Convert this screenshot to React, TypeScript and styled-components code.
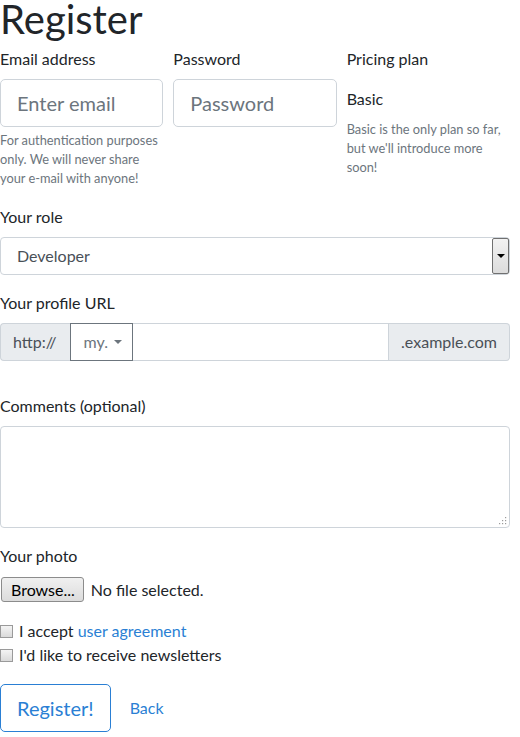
import React from "react";
import styled, { createGlobalStyle } from "styled-components";

const Global = createGlobalStyle`
  html, body { margin: 0; padding: 0; background: #fff; }
  body {
    font-family: "Lato", "Noto Sans", "Liberation Sans", sans-serif;
    font-size: 16px;
    line-height: 24px;
    color: #212529;
  }
  * { box-sizing: border-box; }
`;

const Page = styled.form`
  width: 510px;
  display: flex;
  flex-direction: column;
`;

const Title = styled.h1`
  margin: 0 0 8px;
  font-size: 40px;
  line-height: 39px;
  font-weight: 400;
`;

const Row = styled.div`
  display: grid;
  grid-template-columns: repeat(3, 1fr);
  column-gap: 10px;
  margin-bottom: 16px;
`;

const Group = styled.div<{ $mb?: number }>`
  display: flex;
  flex-direction: column;
  margin-bottom: ${(p) => (p.$mb ?? 16)}px;
`;

const Label = styled.label`
  display: block;
  font-size: 16px;
  line-height: 24px;
  margin-bottom: 8px;
`;

const LargeInput = styled.input`
  width: 100%;
  height: 48px;
  padding: 0 16px;
  font-family: inherit;
  font-size: 20px;
  color: #495057;
  border: 1px solid #ced4da;
  border-radius: 5px;
  background: #fff;
  outline: none;
  &::placeholder { color: #6c757d; opacity: 1; }
`;

const Help = styled.small<{ $mt?: number }>`
  display: block;
  margin-top: ${(p) => (p.$mt ?? 4)}px;
  font-size: 12.8px;
  line-height: 19.2px;
  color: #6c757d;
`;

const Static = styled.p`
  margin: 0;
  padding-top: 8px;
  font-size: 16px;
  line-height: 24px;
`;

const SelectWrap = styled.div`
  position: relative;
  height: 38px;
`;

const Select = styled.select`
  appearance: none;
  -webkit-appearance: none;
  width: 100%;
  height: 38px;
  padding: 0 16px;
  font-family: inherit;
  font-size: 16px;
  color: #495057;
  background: #fff;
  border: 1px solid #ced4da;
  border-radius: 4px;
  outline: none;
`;

const SelectArrow = styled.span`
  position: absolute;
  top: 1px;
  right: 1px;
  width: 17px;
  height: 36px;
  border: 1px solid #707070;
  border-radius: 2px;
  background: linear-gradient(#f2f2f2, #dcdcdc);
  display: flex;
  align-items: center;
  justify-content: center;
  pointer-events: none;
  &::after {
    content: "";
    border-left: 4px solid transparent;
    border-right: 4px solid transparent;
    border-top: 4px solid #000;
  }
`;

const InputGroup = styled.div`
  display: flex;
  height: 38px;
`;

const Addon = styled.span<{ $side: "left" | "right" }>`
  display: flex;
  align-items: center;
  padding: 0 ${(p) => (p.$side === "left" ? "13px 0 12px" : "12px")};
  background: #e9ecef;
  border: 1px solid #ced4da;
  color: #495057;
  font-size: 16px;
  white-space: nowrap;
  border-radius: ${(p) => (p.$side === "left" ? "4px 0 0 4px" : "0 4px 4px 0")};
  ${(p) => (p.$side === "left" ? "border-right: none;" : "border-left: none;")}
`;

const DropButton = styled.button`
  display: flex;
  align-items: center;
  gap: 6px;
  width: 63px;
  padding: 0 0 0 13px;
  font-family: inherit;
  font-size: 16px;
  color: #6c757d;
  background: #fff;
  border: 1px solid #6c757d;
  border-radius: 0;
  &::after {
    content: "";
    margin-top: 1px;
    border-left: 4px solid transparent;
    border-right: 4px solid transparent;
    border-top: 4px solid #6c757d;
  }
`;

const GroupInput = styled.input`
  flex: 1;
  min-width: 0;
  height: 38px;
  padding: 0 12px;
  font-family: inherit;
  font-size: 16px;
  border: 1px solid #ced4da;
  border-left: none;
  outline: none;
`;

const AreaWrap = styled.div`
  position: relative;
  height: 102px;
`;

const TextArea = styled.textarea`
  display: block;
  width: 100%;
  height: 102px;
  resize: none;
  padding: 6px 12px;
  font-family: inherit;
  font-size: 16px;
  border: 1px solid #ced4da;
  border-radius: 4px;
  outline: none;
`;

const Grip = styled.svg`
  position: absolute;
  right: 3px;
  bottom: 3px;
`;

const FileRow = styled.div`
  display: flex;
  align-items: center;
  gap: 7px;
  height: 26px;
  margin-top: 1px;
  margin-bottom: 16px;
`;

const BrowseButton = styled.button`
  height: 25px;
  margin-left: 1px;
  padding: 0 8px 0 9px;
  font-family: inherit;
  font-size: 16px;
  color: #000;
  background: linear-gradient(#f0f0f0, #dcdcdc);
  border: 1px solid #8c8c8c;
  border-radius: 3px;
`;

const FileText = styled.span`
  font-size: 16px;
`;

const CheckLine = styled.label`
  display: flex;
  align-items: center;
  gap: 6px;
  height: 24px;
  font-size: 16px;
`;

const Check = styled.input.attrs({ type: "checkbox" })`
  appearance: none;
  -webkit-appearance: none;
  width: 13px;
  height: 13px;
  margin: 1px 0 0 0;
  border: 1px solid #9a9a9a;
  border-radius: 0;
  background: linear-gradient(#f4f4f4, #dadada);
`;

const Link = styled.a`
  color: #2a7fd4;
  text-decoration: none;
`;

const Actions = styled.div`
  display: flex;
  align-items: center;
  margin-top: 17px;
`;

const PrimaryOutline = styled.button`
  height: 48px;
  padding: 0 16px;
  font-family: inherit;
  font-size: 20px;
  color: #2a7fd4;
  background: #fff;
  border: 1px solid #2a7fd4;
  border-radius: 5px;
`;

const BackLink = styled(Link)`
  margin-left: 19px;
  font-size: 16px;
`;

export default function App() {
  return (
    <>
      <Global />
      <Page onSubmit={(e) => e.preventDefault()}>
        <Title>Register</Title>
        <Row>
          <div>
            <Label>Email address</Label>
            <LargeInput type="email" placeholder="Enter email" />
            <Help>For authentication purposes only. We will never share your e-mail with anyone!</Help>
          </div>
          <div>
            <Label>Password</Label>
            <LargeInput type="password" placeholder="Password" />
          </div>
          <div>
            <Label>Pricing plan</Label>
            <Static>Basic</Static>
            <Help $mt={9}>Basic is the only plan so far, but we'll introduce more soon!</Help>
          </div>
        </Row>
        <Group>
          <Label>Your role</Label>
          <SelectWrap>
            <Select defaultValue="dev">
              <option value="dev">Developer</option>
              <option value="des">Designer</option>
            </Select>
            <SelectArrow />
          </SelectWrap>
        </Group>
        <Group $mb={33}>
          <Label>Your profile URL</Label>
          <InputGroup>
            <Addon $side="left">http://</Addon>
            <DropButton type="button">my.</DropButton>
            <GroupInput type="text" />
            <Addon $side="right">.example.com</Addon>
          </InputGroup>
        </Group>
        <Group>
          <Label>Comments (optional)</Label>
          <AreaWrap>
            <TextArea />
            <Grip width="9" height="9" viewBox="0 0 9 9">
              <g fill="#9a9a9a">
                <rect x="7" y="1" width="1.2" height="1.2" />
                <rect x="4" y="4" width="1.2" height="1.2" />
                <rect x="7" y="4" width="1.2" height="1.2" />
                <rect x="1" y="7" width="1.2" height="1.2" />
                <rect x="4" y="7" width="1.2" height="1.2" />
                <rect x="7" y="7" width="1.2" height="1.2" />
              </g>
            </Grip>
          </AreaWrap>
        </Group>
        <Group $mb={0}>
          <Label>Your photo</Label>
        </Group>
        <FileRow>
          <BrowseButton type="button">Browse...</BrowseButton>
          <FileText>No file selected.</FileText>
        </FileRow>
        <CheckLine>
          <Check />
          <span>
            I accept <Link href="#">user agreement</Link>
          </span>
        </CheckLine>
        <CheckLine>
          <Check />
          <span>I'd like to receive newsletters</span>
        </CheckLine>
        <Actions>
          <PrimaryOutline type="submit">Register!</PrimaryOutline>
          <BackLink href="#">Back</BackLink>
        </Actions>
      </Page>
    </>
  );
}
